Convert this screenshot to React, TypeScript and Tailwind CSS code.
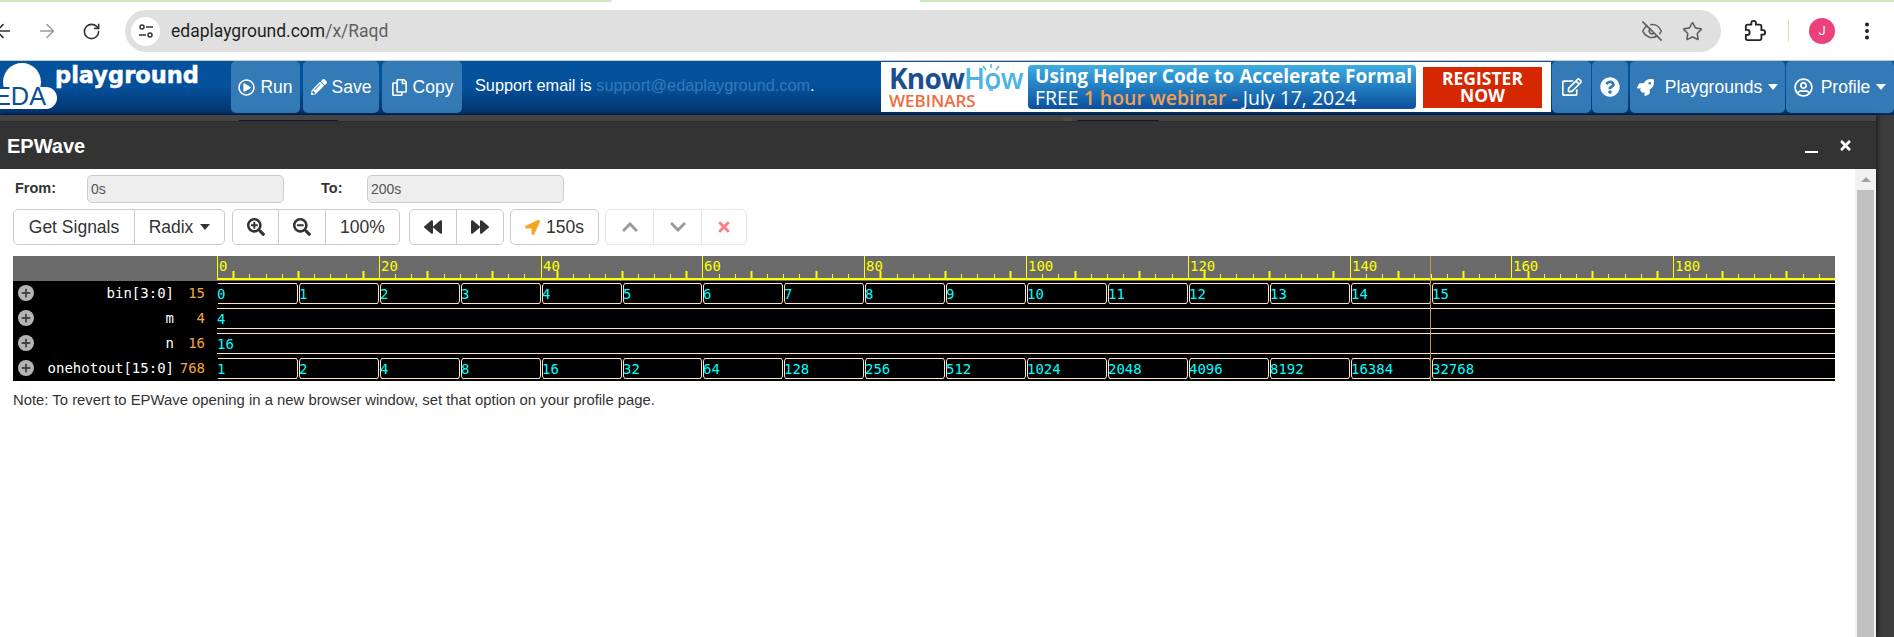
import React from "react";
import { ArrowLeft, ArrowRight, RotateCw, EyeOff, Star, EllipsisVertical } from "lucide-react";
import {
  FaRegPlayCircle, FaPencilAlt, FaRegCopy, FaRegEdit, FaQuestionCircle, FaRocket, FaRegUserCircle,
  FaSearchPlus, FaSearchMinus, FaBackward, FaForward, FaLocationArrow, FaChevronUp, FaChevronDown, FaTimes, FaPlus,
} from "react-icons/fa";

const S = 8.09;
const mono = '"DejaVu Sans Mono", monospace';

function Logo() {
  return (
    <svg width="231" height="54" viewBox="0 0 231 54" className="shrink-0">
      <g fill="#fff">
        <circle cx="22" cy="21" r="19" />
        <circle cx="46" cy="37" r="11" />
        <rect x="-4" y="26" width="50" height="22" />
      </g>
      <text x="-6" y="44" fontSize="26" fill="#0a4f96" fontFamily="Liberation Sans, sans-serif" textLength="52" lengthAdjust="spacingAndGlyphs">EDA</text>
      <text x="55" y="22" fontSize="23" fontWeight="700" stroke="#fff" strokeWidth="0.5" fill="#fff" fontFamily="DejaVu Sans, sans-serif" textLength="144" lengthAdjust="spacingAndGlyphs">playground</text>
    </svg>
  );
}

function NavBtn({ w, ml = 0, children }: { w: string; ml?: number; children: React.ReactNode }) {
  return <div className={`${w} ${ml === 1 ? "ml-px" : ml === 2 ? "ml-[2px]" : ml === 3 ? "ml-[3px]" : ""} h-[52px] shrink-0 rounded-[5px] bg-[#337ab7] flex items-center justify-center gap-[5px] text-white text-[17.5px]`}>{children}</div>;
}

function Caret() {
  return <span className="w-0 h-0 border-x-[5px] border-x-transparent border-t-[6px] border-t-current ml-[1px]" />;
}

function Banner() {
  return (
    <div className="w-[670px] h-[50px] mt-px shrink-0 bg-white flex items-center font-['Open_Sans',sans-serif]">
      <div className="w-[147px] pl-2 flex flex-col">
        <div className="relative h-[26px] text-[28px] leading-[26px] font-bold tracking-[-0.8px] whitespace-nowrap">
          <span className="text-[#1c4f8f]">Know</span><span className="text-[#4fb3e2] font-semibold">How</span>
          <svg className="absolute left-[90px] -top-[1px]" width="24" height="30" viewBox="0 0 24 30" stroke="#4fb3e2" strokeWidth="1.4" fill="none">
            <path d="M12 0v4M4 2l3 4M20 2l-3 4M9 24h6M10 26h4" />
          </svg>
        </div>
        <div className="text-[17px] leading-[19px] font-semibold text-[#ef6c3c] whitespace-nowrap">WEBINARS</div>
      </div>
      <div className="w-[388px] h-[44px] rounded-[4px] bg-gradient-to-b from-[#3eaee2] to-[#0c4f9d] flex flex-col items-start pl-[7px] text-white whitespace-nowrap">
        <div className="text-[19.1px] leading-[22px] font-bold">Using Helper Code to Accelerate Formal</div>
        <div className="text-[19.45px] leading-[22px] font-normal">FREE <span className="text-[#f2a055] font-semibold">1 hour webinar -</span> July 17, 2024</div>
      </div>
      <div className="ml-[7px] w-[119px] h-[41px] bg-[#d62800] flex flex-col items-center justify-center text-white text-[17.5px] leading-[17px] font-bold">
        <span>REGISTER</span><span>NOW</span>
      </div>
    </div>
  );
}

function Btn({ w, last, dim, children }: { w: string; last?: boolean; dim?: boolean; children: React.ReactNode }) {
  return <div className={`${w} h-full flex items-center justify-center gap-[6px] ${last ? "" : dim ? "border-r border-[#e6e6e6]" : "border-r border-[#ccc]"}`}>{children}</div>;
}

function Group({ ml, dim, children }: { ml: string; dim?: boolean; children: React.ReactNode }) {
  return <div className={`${ml} h-[36px] flex border ${dim ? "border-[#e6e6e6]" : "border-[#ccc]"} rounded-[5px] text-[17.5px] text-[#333]`}>{children}</div>;
}

const signals = [
  { name: "bin[3:0]", val: "15" },
  { name: "m", val: "4" },
  { name: "n", val: "16" },
  { name: "onehotout[15:0]", val: "768" },
];

function Wave() {
  const ticks = [];
  for (let t = 0; t <= 200; t += 2) {
    const x = Math.round(t * S) + 0.5;
    if (t % 20 === 0) continue;
    const tall = (t - 2) % 8 === 0;
    ticks.push(<path key={t} d={`M${x} ${tall ? 15 : 18}V22`} stroke="#ffff00" strokeWidth={tall ? 2 : 1} />);
  }
  const labels = [];
  for (let t = 0; t < 200; t += 20) {
    const x = Math.round(t * S) + 0.5;
    labels.push(<path key={"m" + t} d={`M${x} 0V23`} stroke="#ffff00" />);
    labels.push(<text key={"l" + t} x={x + 1.5} y={15} fontSize="14" fill="#ffff00" fontFamily={mono}>{t}</text>);
  }
  const bus = (top: number, vals: string[]) => {
    const bot = top + 20;
    return vals.map((v, i) => {
      const a = Math.round(i * 10 * S);
      const first = i === 0;
      const last = i === vals.length - 1;
      const b = last ? 1620 : Math.round((i + 1) * 10 * S);
      const start = first
        ? `M1 ${top + 0.5}`
        : `M${a + 1.5} ${top + 3}L${a + 2.5} ${top + 0.5}`;
      const right = last
        ? `H${b}M${b} ${bot + 0.5}`
        : `H${b - 1.5}L${b - 0.5} ${top + 3}V${bot - 2}L${b - 1.5} ${bot + 0.5}`;
      const close = first
        ? `H1`
        : `H${a + 2.5}L${a + 1.5} ${bot - 2}V${top + 3}`;
      return (
        <g key={i}>
          <path d={`${start}${right}${close}`} fill="none" stroke="#ffe4c4" />
          <text x={a + (first ? 0 : 1)} y={top + 16} fontSize="14" fill="#00ffff" fontFamily={mono}>{v}</text>
        </g>
      );
    });
  };
  const flat = (top: number, v: string) => (
    <g>
      <path d={`M0 ${top + 0.5}H1618M0 ${top + 20.5}H1618`} stroke="#ffe4c4" />
      <text x={0} y={top + 16} fontSize="14" fill="#00ffff" fontFamily={mono}>{v}</text>
    </g>
  );
  const bins = Array.from({ length: 16 }, (_, i) => String(i));
  const hots = Array.from({ length: 16 }, (_, i) => String(2 ** i));
  return (
    <svg width="1618" height="125" viewBox="0 0 1618 125" className="block shrink-0">
      <rect width="1618" height="25" fill="#6b6b6b" />
      <rect y="25" width="1618" height="100" fill="#000" />
      {ticks}
      {labels}
      <rect y="22" width="1618" height="2" fill="#ffff00" />
      {bus(27, bins)}
      {flat(52, "4")}
      {flat(77, "16")}
      {bus(102, hots)}
      <path d="M1213.5 0V125" stroke="#c8964f" />
    </svg>
  );
}

export default function App() {
  return (
    <div className="w-[1894px] h-[637px] overflow-hidden flex flex-col bg-white font-['Liberation_Sans',Arial,sans-serif]">
      {/* Browser chrome */}
      <div className="h-[2px] flex justify-between shrink-0">
        <div className="w-[612px] bg-[#cbe8bf] rounded-br-[4px]" />
        <div className="w-[974px] bg-[#cbe8bf]" />
      </div>
      <div className="h-[58px] shrink-0 flex items-center bg-white">
        <ArrowLeft size={22} strokeWidth={1.8} className="ml-[-8px] text-[#333]" />
        <ArrowRight size={22} strokeWidth={1.6} className="ml-[22px] text-[#9a9a9a]" />
        <RotateCw size={19} strokeWidth={2} className="ml-[24px] text-[#333]" />
        <div className="ml-[24px] w-[1596px] h-[42px] rounded-full bg-[#e0e0e0] flex items-center pl-[6px] pr-[18px]">
          <div className="w-[29px] h-[29px] rounded-full bg-white flex items-center justify-center">
            <svg width="16" height="16" viewBox="0 0 16 16" fill="none" stroke="#333" strokeWidth="1.5">
              <circle cx="4" cy="4" r="2" /><path d="M8 4h7M1 12h7" /><circle cx="12" cy="12" r="2" />
            </svg>
          </div>
          <div className="ml-[11px] mt-px text-[17.5px] font-['Roboto',sans-serif] text-[#1f1f1f]">edaplayground.com<span className="text-[#5f5f5f]">/x/Raqd</span></div>
          <EyeOff size={22} strokeWidth={1.7} className="ml-auto text-[#5f5f5f]" />
          <Star size={21} strokeWidth={1.8} className="ml-[19px] text-[#5f5f5f]" />
        </div>
        <svg width="22" height="22" viewBox="0 0 24 24" fill="none" stroke="#222" strokeWidth="2" className="ml-[23px]">
          <path d="M20.5 11H19V7c0-1.1-.9-2-2-2h-4V3.5C13 2.12 11.88 1 10.5 1S8 2.12 8 3.5V5H4c-1.1 0-2 .9-2 2v3.8h1.5c1.49 0 2.7 1.21 2.7 2.7s-1.21 2.7-2.7 2.7H2V20c0 1.1.9 2 2 2h13c1.1 0 2-.9 2-2v-4h1.5c1.38 0 2.5-1.12 2.5-2.5S21.88 11 20.5 11z" />
        </svg>
        <div className="ml-[22px] w-px h-[22px] bg-[#cbe8bf]" />
        <div className="ml-[20px] w-[26px] h-[26px] rounded-full bg-[#ec407a] flex items-center justify-center text-white text-[13px] font-['Roboto',sans-serif]">J</div>
        <EllipsisVertical size={22} strokeWidth={2.4} className="ml-[21px] text-[#222]" />
      </div>

      {/* Site nav */}
      <div className="h-[55px] shrink-0 flex items-start border-t border-[#c8c8c8] border-b border-b-[#03264f] bg-gradient-to-b from-[#05529c] via-[#05509a] to-[#04326c]">
        <Logo />
        <NavBtn w="w-[69px]"><FaRegPlayCircle size={17} /><span>Run</span></NavBtn>
        <NavBtn w="w-[76px]" ml={3}><FaPencilAlt size={16} /><span>Save</span></NavBtn>
        <NavBtn w="w-[80px]" ml={3}><FaRegCopy size={17} /><span>Copy</span></NavBtn>
        <div className="ml-[13px] w-[407px] h-[48px] flex items-center text-[16.3px] text-white whitespace-nowrap">
          Support email is&nbsp;<span className="text-[#337ab7]">support@edaplayground.com</span>.
        </div>
        <Banner />
        <NavBtn w="w-[39px]" ml={1}><FaRegEdit size={20} /></NavBtn>
        <NavBtn w="w-[36px]" ml={1}><FaQuestionCircle size={20} /></NavBtn>
        <NavBtn w="w-[155px]" ml={2}><FaRocket size={17} /><span className="ml-[6px]">Playgrounds</span><Caret /></NavBtn>
        <NavBtn w="w-[108px]" ml={1}><FaRegUserCircle size={19} /><span className="ml-[3px]">Profile</span><Caret /></NavBtn>
      </div>

      {/* Page behind the modal + EPWave modal */}
      <div className="flex-1 min-h-0 flex bg-[#3c3c3c]">
        <div className="w-[1876px] shrink-0 flex flex-col bg-[#333] shadow-[2px_0_4px_rgba(0,0,0,0.5)]">
          <div className="h-[7px] shrink-0 bg-[#444] border-b border-[#2b2b2b] flex items-end">
            <div className="ml-[239px] w-[99px] h-px bg-[#141b28]" />
            <div className="ml-[725px] w-[9px] h-[3px] bg-[#4d4d4d]" />
            <div className="ml-[5px] w-[82px] h-px bg-[#141b28]" />
          </div>
          <div className="h-[47px] shrink-0 flex items-center pl-[7px] text-white">
            <span className="text-[20px] font-bold">EPWave</span>
            <div className="ml-auto w-[13px] h-[2px] mt-[13px] bg-white" />
            <FaTimes size={15} className="ml-[20px] mr-[23px] -mt-[1px]" />
          </div>
          <div className="flex-1 min-h-0 flex bg-white">
            <div className="flex-1 min-w-0 flex flex-col">
              <div className="mt-[6px] h-[28px] flex items-center text-[14.5px] font-bold text-[#333]">
                <span className="ml-[15px] w-[72px]">From:</span>
                <div className="w-[197px] h-[28px] rounded-[5px] border border-[#ccc] bg-[#eee] pl-[3px] pt-px flex items-center text-[14px] font-normal text-[#555]">0s</div>
                <span className="ml-[37px] w-[46px]">To:</span>
                <div className="w-[197px] h-[28px] rounded-[5px] border border-[#ccc] bg-[#eee] pl-[3px] pt-px flex items-center text-[14px] font-normal text-[#555]">200s</div>
              </div>
              <div className="mt-[6px] h-[36px] flex">
                <Group ml="ml-[13px]">
                  <Btn w="w-[121px]">Get Signals</Btn>
                  <Btn w="w-[89px]" last>Radix<Caret /></Btn>
                </Group>
                <Group ml="ml-[7px]">
                  <Btn w="w-[46px]"><FaSearchPlus size={18} /></Btn>
                  <Btn w="w-[47px]"><FaSearchMinus size={18} /></Btn>
                  <Btn w="w-[73px]" last>100%</Btn>
                </Group>
                <Group ml="ml-[9px]">
                  <Btn w="w-[47px]"><FaBackward size={18} /></Btn>
                  <Btn w="w-[46px]" last><FaForward size={18} /></Btn>
                </Group>
                <Group ml="ml-[6px]">
                  <Btn w="w-[87px]" last><FaLocationArrow size={15} className="text-[#f5a623]" /><span>150s</span></Btn>
                </Group>
                <Group ml="ml-[6px]" dim>
                  <Btn w="w-[48px]" dim><FaChevronUp size={18} className="text-[#999]" /></Btn>
                  <Btn w="w-[48px]" dim><FaChevronDown size={18} className="text-[#999]" /></Btn>
                  <Btn w="w-[44px]" last><FaTimes size={16} className="text-[#f77f85]" /></Btn>
                </Group>
              </div>
              <div className="mt-[11px] ml-[13px] flex">
                <div className="w-[204px] shrink-0 flex flex-col">
                  <div className="h-[25px] bg-[#6b6b6b]" />
                  {signals.map((s) => (
                    <div key={s.name} className="h-[25px] bg-black flex items-center pb-px" style={{ fontFamily: mono }}>
                      <div className="ml-[5px] w-[16px] h-[16px] rounded-full bg-[#b4b4b4] flex items-center justify-center text-[#444]"><FaPlus size={10} /></div>
                      <span className="w-[140px] text-right text-[14px] leading-none text-white whitespace-nowrap">{s.name}</span>
                      <span className="w-[31px] text-right text-[14px] leading-none text-[#f5a742]">{s.val}</span>
                    </div>
                  ))}
                </div>
                <Wave />
              </div>
              <div className="mt-[11px] ml-[13px] text-[14.85px] leading-[17px] text-[#333]">Note: To revert to EPWave opening in a new browser window, set that option on your profile page.</div>
            </div>
            {/* Scrollbar */}
            <div className="w-[21px] shrink-0 bg-[#f1f1f1] flex flex-col items-center">
              <div className="h-[21px] shrink-0 flex items-center justify-center">
                <div className="w-0 h-0 border-x-[5px] border-x-transparent border-b-[5px] border-b-[#a3a3a3]" />
              </div>
              <div className="w-[17px] flex-1 bg-[#c1c1c1]" />
            </div>
          </div>
        </div>
      </div>
    </div>
  );
}
